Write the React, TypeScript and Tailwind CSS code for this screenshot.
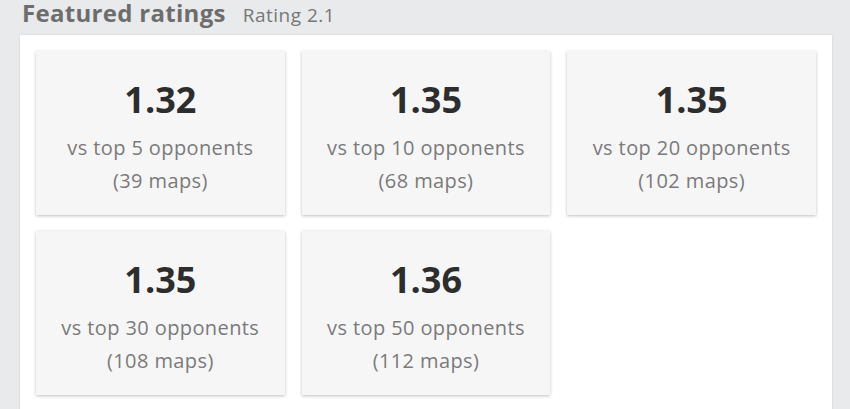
const RATINGS = [
  { value: "1.32", top: 5, maps: 39 },
  { value: "1.35", top: 10, maps: 68 },
  { value: "1.35", top: 20, maps: 102 },
  { value: "1.35", top: 30, maps: 108 },
  { value: "1.36", top: 50, maps: 112 },
];

function RatingCard({ value, top, maps }: { value: string; top: number; maps: number }) {
  return (
    <div className="h-[164px] bg-[#f6f6f7] shadow-[0_1px_3px_rgba(0,0,0,0.25)] flex flex-col items-center pt-[29px]">
      <div className="text-[36px] leading-[40px] font-bold text-[#2d2d2d]">{value}</div>
      <div className="mt-[11px] text-[20px] leading-[33px] tracking-[0.4px] text-[#7a7a7a]">vs top {top} opponents</div>
      <div className="text-[20px] leading-[33px] tracking-[0.4px] text-[#7a7a7a]">({maps} maps)</div>
    </div>
  );
}

export default function App() {
  return (
    <div className="w-[850px] h-[409px] overflow-hidden bg-[#e9eaec]" style={{ fontFamily: '"Open Sans", sans-serif' }}>
      <div className="flex items-baseline gap-[17px] pl-[22px] h-[35px]">
        <span className="text-[24px] leading-[26px] tracking-[0.3px] font-bold text-[#6d6d6d]">Featured ratings</span>
        <span className="text-[19px] leading-[26px] tracking-[0.5px] text-[#777777]">Rating 2.1</span>
      </div>
      <div className="ml-[20px] w-[812px] h-[400px] bg-white shadow-[0_0_2px_rgba(0,0,0,0.12)] pt-[16px] px-[16px]">
        <div className="grid grid-cols-3 gap-x-[17px] gap-y-[16px]">
          {RATINGS.map((r, i) => (
            <RatingCard key={i} {...r} />
          ))}
        </div>
      </div>
    </div>
  );
}
